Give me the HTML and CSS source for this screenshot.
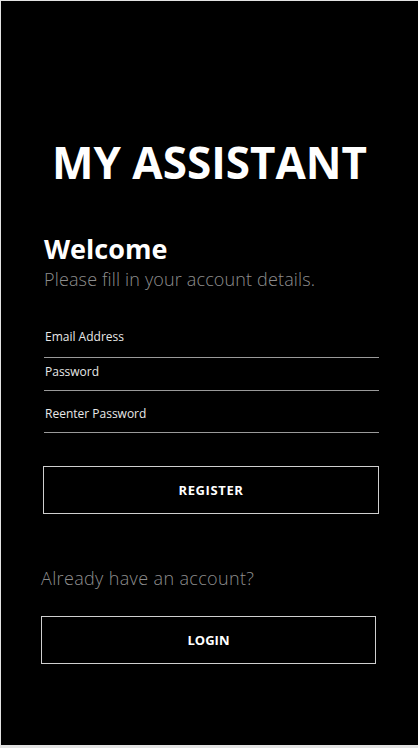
FILE: index.html
```html
<!DOCTYPE html>
<html>
<head>
<meta charset="utf-8">
<link rel="stylesheet" href="styles.css">
</head>
<body>
<main class="screen">
  <h1 class="title">MY ASSISTANT</h1>
  <section class="intro">
    <h2 class="welcome">Welcome</h2>
    <p class="sub">Please fill in your account details.</p>
  </section>
  <form class="form">
    <div class="field field-first"><span class="label">Email Address</span></div>
    <div class="field"><span class="label">Password</span></div>
    <div class="field field-tall"><span class="label">Reenter Password</span></div>
    <button type="button" class="btn btn-register">REGISTER</button>
  </form>
  <p class="already">Already have an account?</p>
  <button type="button" class="btn btn-login">LOGIN</button>
</main>
</body>
</html>
```
FILE: styles.css
```css
html, body {
  margin: 0;
  padding: 0;
}
body {
  background: #e2e2e2;
  width: 418px;
  height: 748px;
  overflow: hidden;
  font-family: "Open Sans", "Lato", sans-serif;
}
.screen {
  margin: 1px 0 0 1px;
  width: 417px;
  height: 744px;
  background: #000;
  color: #fff;
  box-sizing: border-box;
  padding-top: 135px;
  display: flex;
  flex-direction: column;
}
.title {
  margin: 0;
  text-align: center;
  font-size: 44px;
  font-weight: 700;
  line-height: 52px;
  letter-spacing: 0;
}
.intro {
  margin: 45px 0 0 43px;
}
.welcome {
  margin: 0;
  font-size: 27px;
  font-weight: 700;
  line-height: 32px;
}
.sub {
  margin: 2px 0 0;
  color: #8e8e8e;
  font-size: 18px;
  font-weight: 300;
  line-height: 24px;
  letter-spacing: 0.15px;
}
.form {
  margin: 40px 0 0 43px;
  width: 335px;
  display: flex;
  flex-direction: column;
}
.field {
  height: 33px;
  border-bottom: 1px solid #9a9a9a;
  box-sizing: border-box;
  padding: 0 0 0 1px;
}
.field-first {
  height: 27px;
}
.field-tall {
  height: 42px;
  padding-top: 9px;
}
.label {
  font-size: 12px;
  line-height: 16px;
  color: #e8e8e8;
  display: block;
  padding-top: 6px;
}
.field-first .label {
  padding-top: 0;
  margin-top: -2px;
}
.btn {
  display: block;
  background: #000;
  color: #fff;
  border: 1px solid #cfcfcf;
  font-family: inherit;
  font-size: 13px;
  font-weight: 700;
  height: 48px;
  padding: 0;
  cursor: pointer;
}
.btn-register {
  margin: 33px 0 0 -1px;
  width: 336px;
  letter-spacing: 0.6px;
}
.already {
  margin: 52px 0 0 40px;
  color: #8e8e8e;
  font-size: 18px;
  font-weight: 300;
  line-height: 24px;
  letter-spacing: 0.35px;
}
.btn-login {
  margin: 26px 0 0 40px;
  width: 335px;
}
```
